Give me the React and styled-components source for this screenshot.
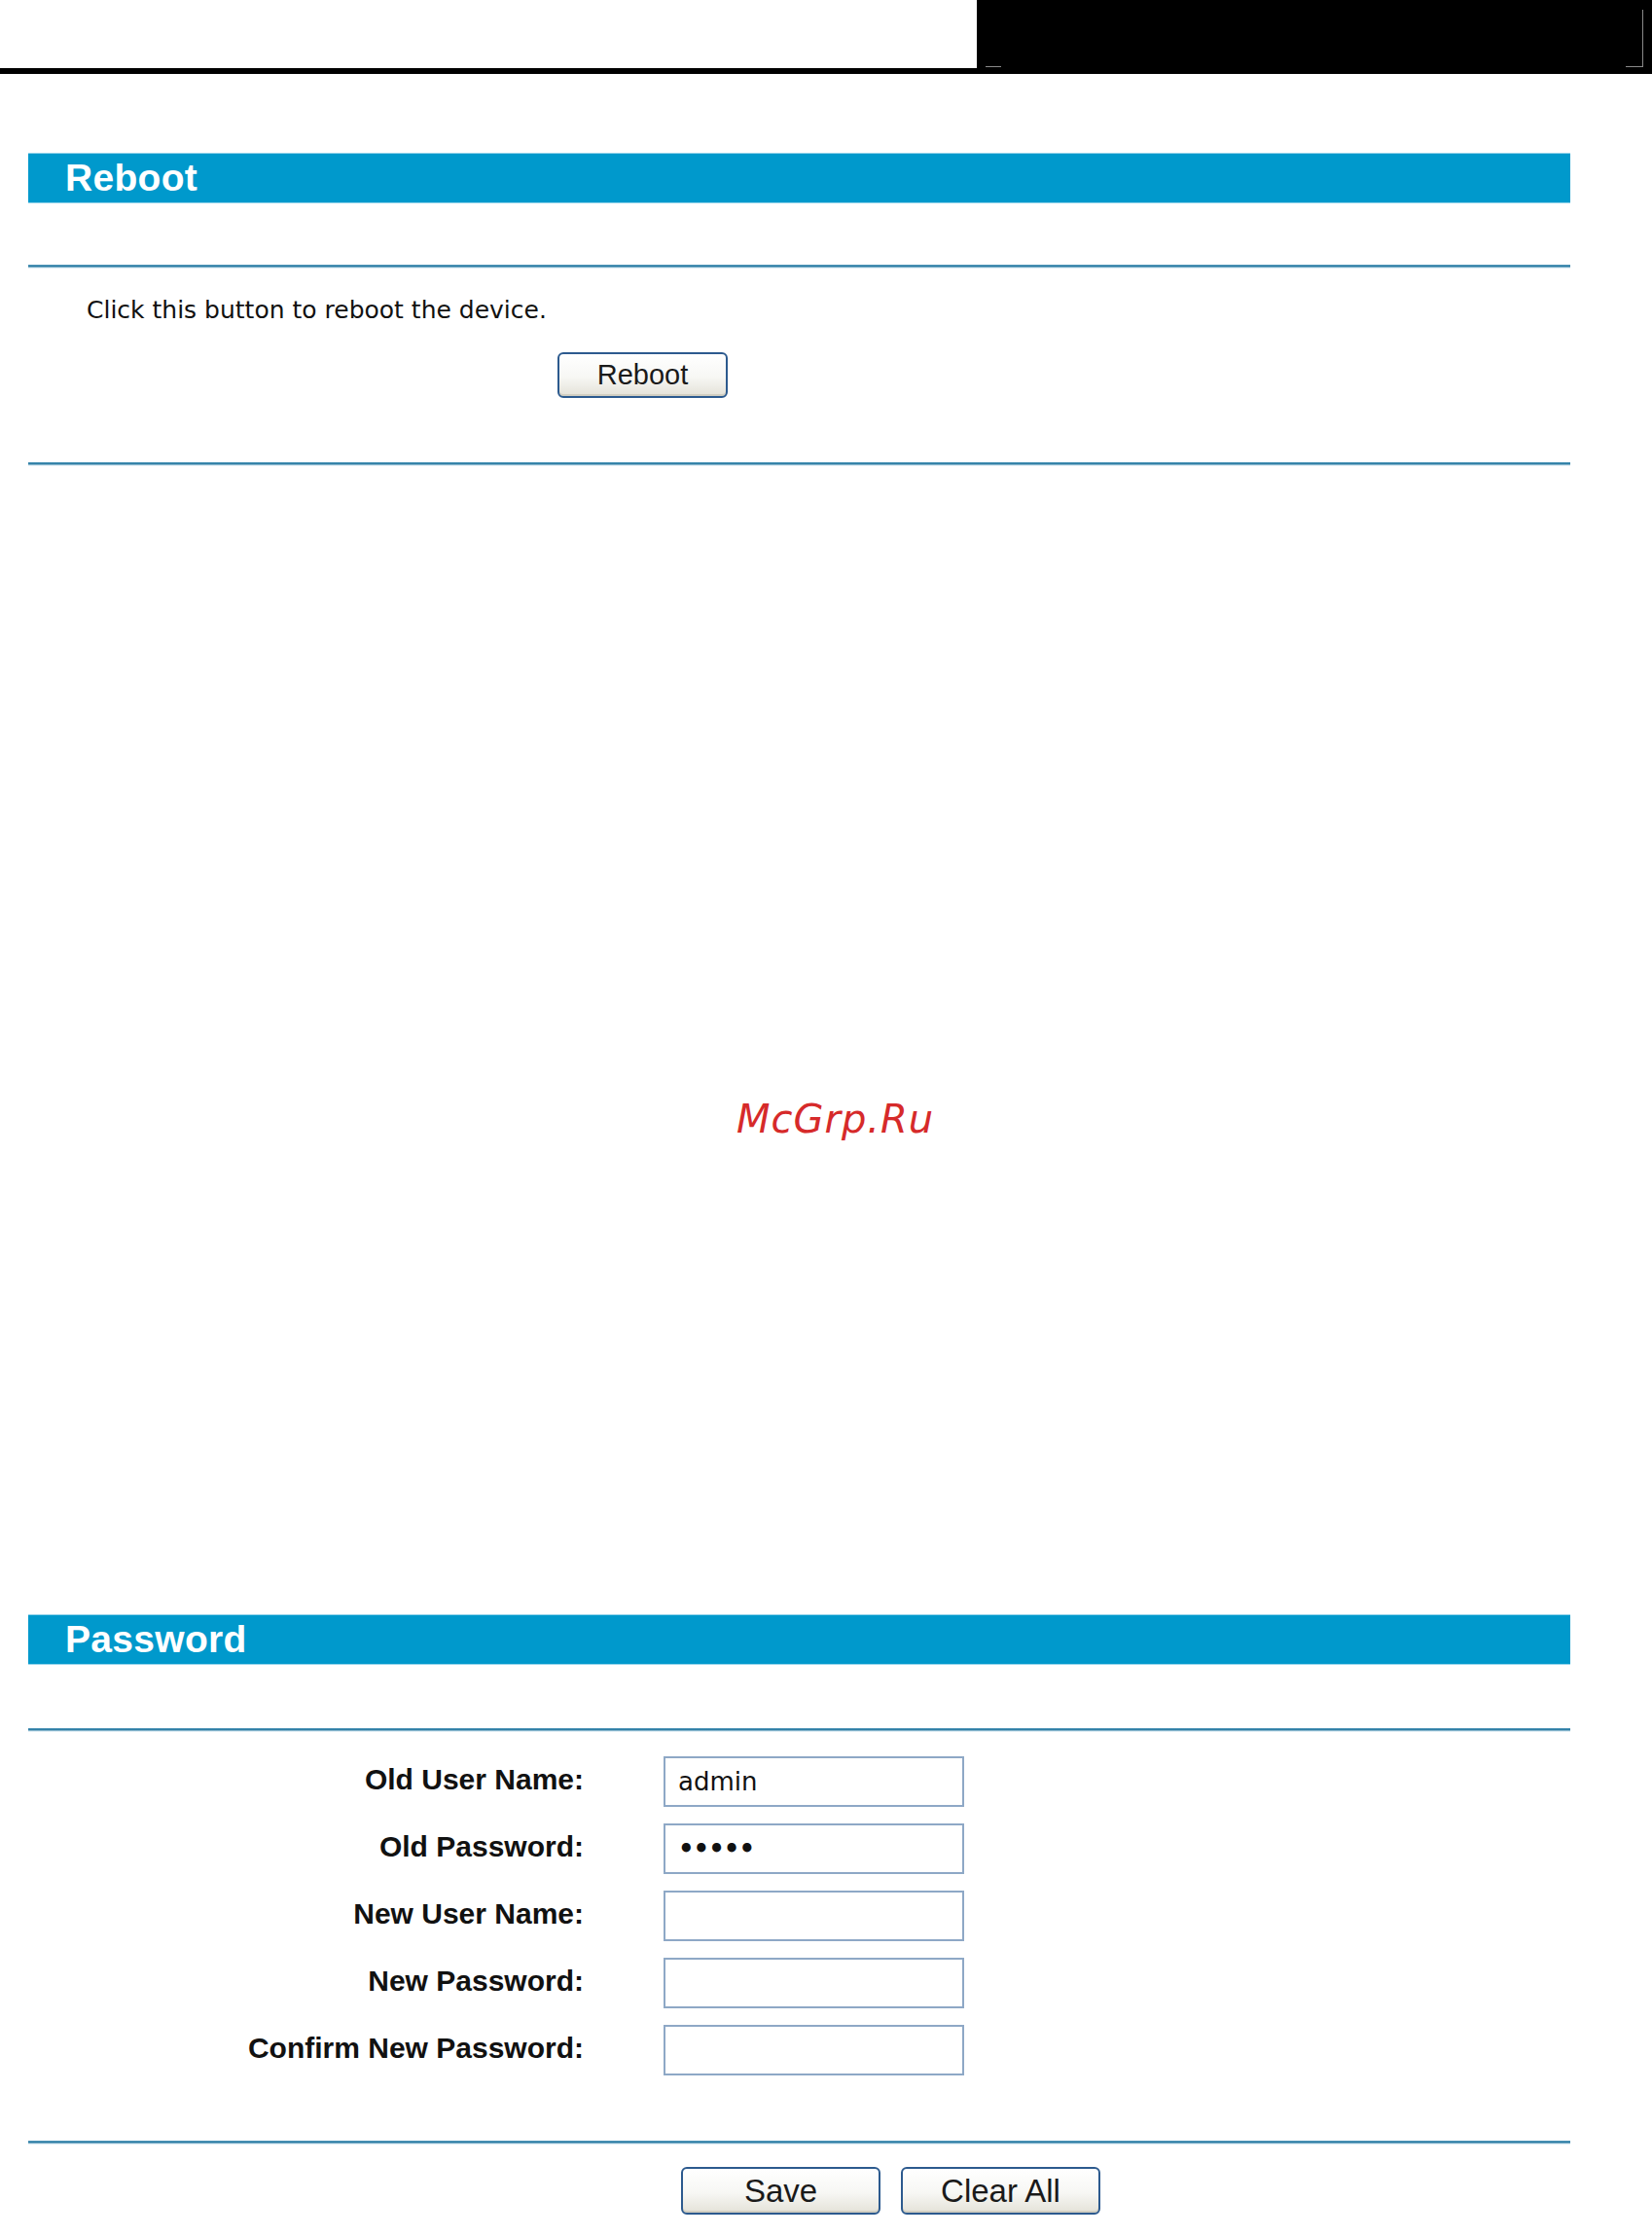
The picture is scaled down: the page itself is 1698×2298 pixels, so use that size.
import React from "react";
import styled, { createGlobalStyle } from "styled-components";

const Global = createGlobalStyle`
  html, body { margin: 0; padding: 0; background: #ffffff; }
  body { font-family: "DejaVu Sans", "Liberation Sans", sans-serif; color: #000; }
  * { box-sizing: border-box; }
`;

const Page = styled.div`
  position: relative;
  width: 1698px;
  min-height: 2298px;
  background: #fff;
`;

const TopStrip = styled.div`
  display: flex;
  height: 76px;
`;

const StripLeft = styled.div`
  flex: 1;
  height: 76px;
  border-bottom: 6px solid #000;
`;

const StripBlock = styled.div`
  position: relative;
  width: 694px;
  height: 76px;
  background: #000;
`;

const CropMark = styled.span`
  position: absolute;
  background: #8a8a8a;
  left: ${(p) => p.$left}px;
  top: ${(p) => p.$top}px;
  width: ${(p) => p.$w}px;
  height: ${(p) => p.$h}px;
`;

const Section = styled.section`
  margin-left: 29px;
  width: 1585px;
  margin-top: ${(p) => p.$top}px;
`;

const Header = styled.h2`
  margin: 0;
  height: 52px;
  display: flex;
  align-items: center;
  padding-left: 38px;
  background: #0099cc;
  border-top: 1px solid #93d3ea;
  border-bottom: 1px solid #93d3ea;
  color: #fff;
  font-family: "Liberation Sans", Arial, sans-serif;
  font-weight: bold;
  font-size: 39px;
  letter-spacing: 0.3px;
`;

const Rule = styled.div`
  height: 4px;
  margin-top: ${(p) => p.$top}px;
  background: linear-gradient(
    to bottom,
    #7fb6d0 0px,
    #2a7ba3 1px,
    #2a7ba3 2px,
    #cfe4ee 3px,
    #eef5f9 4px
  );
`;

const Note = styled.p`
  margin: 28px 0 0 60px;
  font-size: 25px;
  line-height: 30px;
  color: #111;
`;

const ButtonRow = styled.div`
  display: flex;
  gap: 21px;
  margin-top: ${(p) => p.$top}px;
  padding-left: ${(p) => p.$left}px;
`;

const Button = styled.button`
  width: ${(p) => p.$w}px;
  height: ${(p) => p.$h}px;
  padding: 0;
  border: 2px solid #2c5a8e;
  border-radius: 6px;
  background: linear-gradient(to bottom, #ffffff 0%, #f7f7f4 55%, #e4e2d8 100%);
  font-family: "Liberation Sans", Arial, sans-serif;
  font-size: ${(p) => p.$fs}px;
  color: #1a1a1a;
  cursor: pointer;
  box-shadow: inset 0 -2px 0 #d2cfc2;
`;

const FormGrid = styled.div`
  display: grid;
  grid-template-columns: 571px 309px;
  column-gap: 82px;
  row-gap: 17px;
  margin-top: 25px;
`;

const Label = styled.label`
  justify-self: end;
  align-self: center;
  padding-bottom: 4px;
  font-family: "Liberation Sans", Arial, sans-serif;
  font-weight: bold;
  font-size: 30px;
  color: #111;
`;

const Field = styled.input`
  width: 309px;
  height: 52px;
  border: 2px solid #8ea8c6;
  padding: 0 0 0 13px;
  font-family: "DejaVu Sans", sans-serif;
  font-size: 26px;
  color: #111;
  background: #fff;
  outline: none;

  &[type="password"] {
    font-weight: bold;
    letter-spacing: -1px;
  }
`;

const Watermark = styled.div`
  position: absolute;
  left: 757px;
  top: 1130px;
  font-family: "DejaVu Sans", sans-serif;
  font-style: oblique;
  font-size: 40px;
  line-height: 40px;
  letter-spacing: 1px;
  color: #d62a2a;
  white-space: nowrap;
`;

const fields = [
  { id: "oldUser", label: "Old User Name:", type: "text", value: "admin" },
  { id: "oldPass", label: "Old Password:", type: "password", value: "admin" },
  { id: "newUser", label: "New User Name:", type: "text", value: "" },
  { id: "newPass", label: "New Password:", type: "password", value: "" },
  { id: "confirm", label: "Confirm New Password:", type: "password", value: "" },
];

export default function App() {
  return (
    <>
      <Global />
      <Page>
        <TopStrip>
          <StripLeft />
          <StripBlock>
            <CropMark $left={9} $top={68} $w={16} $h={1} />
            <CropMark $left={667} $top={68} $w={17} $h={1} />
            <CropMark $left={684} $top={10} $w={1} $h={59} />
          </StripBlock>
        </TopStrip>

        <Section $top={81}>
          <Header>Reboot</Header>
          <Rule $top={63} />
          <Note>Click this button to reboot the device.</Note>
          <ButtonRow $top={28} $left={544}>
            <Button $w={175} $h={47} $fs={29}>Reboot</Button>
          </ButtonRow>
          <Rule $top={66} />
        </Section>

        <Watermark>McGrp.Ru</Watermark>

        <Section $top={1180}>
          <Header>Password</Header>
          <Rule $top={65} />
          <FormGrid>
            {fields.map((f) => (
              <React.Fragment key={f.id}>
                <Label htmlFor={f.id}>{f.label}</Label>
                <Field id={f.id} type={f.type} defaultValue={f.value} />
              </React.Fragment>
            ))}
          </FormGrid>
          <Rule $top={67} />
          <ButtonRow $top={23} $left={671}>
            <Button $w={205} $h={49} $fs={33}>Save</Button>
            <Button $w={205} $h={49} $fs={33}>Clear All</Button>
          </ButtonRow>
        </Section>
      </Page>
    </>
  );
}
